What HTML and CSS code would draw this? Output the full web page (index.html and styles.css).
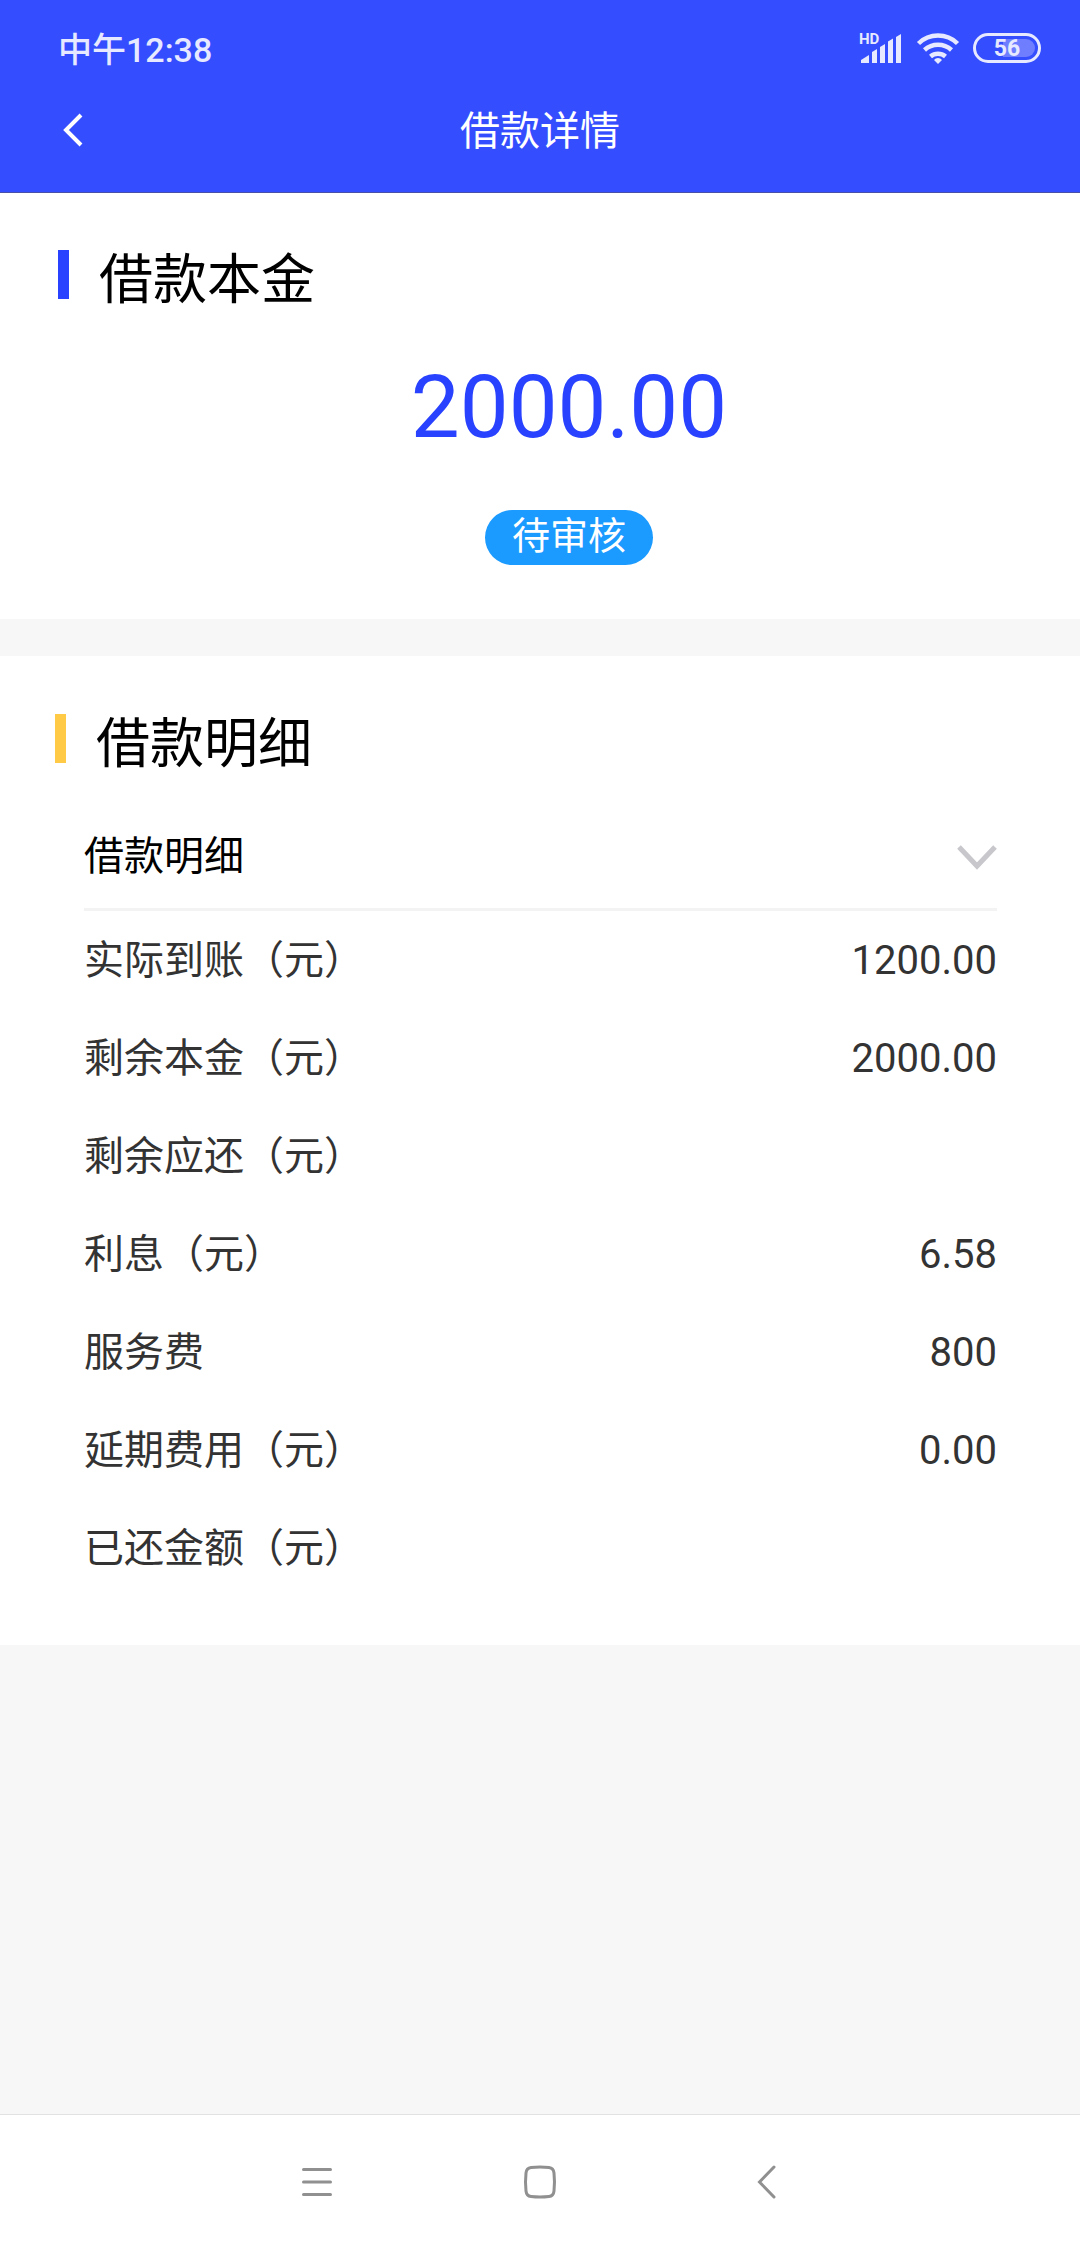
FILE: index.html
```html
<!DOCTYPE html>
<html lang="zh-CN">
  <head>
    <meta charset="UTF-8" />
    <meta name="viewport" content="width=device-width, initial-scale=1.0" />
    <title>借款详情</title>
    <link rel="stylesheet" href="styles.css">
  </head>
  <body>
    <header class="header">
      <div class="status-bar">
        <span class="status-time">中午12:38</span>
        <div class="status-icons">
          <svg class="signal" width="44" height="40" viewBox="0 0 44 40" fill="currentColor">
            <text x="0" y="16" class="signal-text">HD</text>
            <path d="M2 35v-3l8-5v8z"/>
            <path d="M13 35V24l5-3v14z"/>
            <path d="M21 35V19l5-3v19z"/>
            <path d="M29 35V13.500l5-3V35z"/>
            <path d="M37 35V9l5-3v29z"/>
          </svg>
          <svg class="wifi" width="42" height="32" viewBox="0 0 42 32" fill="none" stroke="currentColor" stroke-width="4.500">
            <path d="M1.500 11.500a28 28 0 0 1 39 0"/>
            <path d="M7.500 18a20 20 0 0 1 27 0"/>
            <path d="M13.500 24.500a11.500 11.500 0 0 1 15 0"/>
            <path d="M21 32l-4-4a5 5 0 0 1 8 0z" fill="currentColor" stroke="none"/>
          </svg>
          <div class="battery">
            <div class="battery-level"></div>
            <span class="battery-text">56</span>
          </div>
        </div>
      </div>
      <div class="title-bar">
        <button class="back-button" aria-label="返回">
          <svg width="20" height="34" viewBox="0 0 20 34" fill="none" stroke="currentColor" stroke-width="4">
            <path d="M18 2L3 17l15 15"/>
          </svg>
        </button>
        <h1 class="title">借款详情</h1>
      </div>
    </header>

    <main class="content">
      <section class="principal">
        <h2 class="section-title">借款本金</h2>
        <div class="amount">2000.00</div>
        <span class="badge">待审核</span>
      </section>

      <section class="details">
        <h2 class="section-title yellow">借款明细</h2>
        <div class="detail-box">
          <button class="detail-toggle">
            <span>借款明细</span>
            <svg width="40" height="28" viewBox="0 0 40 28" fill="none" stroke="#c7c7cc" stroke-width="5">
              <path d="M2 4l18 19L38 4"/>
            </svg>
          </button>
          <dl class="detail-list">
            <div class="detail-row"><dt>实际到账（元）</dt><dd>1200.00</dd></div>
            <div class="detail-row"><dt>剩余本金（元）</dt><dd>2000.00</dd></div>
            <div class="detail-row"><dt>剩余应还（元）</dt><dd></dd></div>
            <div class="detail-row"><dt>利息（元）</dt><dd>6.58</dd></div>
            <div class="detail-row"><dt>服务费</dt><dd>800</dd></div>
            <div class="detail-row"><dt>延期费用（元）</dt><dd>0.00</dd></div>
            <div class="detail-row"><dt>已还金额（元）</dt><dd></dd></div>
          </dl>
        </div>
      </section>
    </main>

    <nav class="nav-bar">
      <button class="nav-button" aria-label="菜单">
        <svg width="34" height="34" viewBox="0 0 34 34" fill="none" stroke="currentColor" stroke-width="3" stroke-linecap="round">
          <path d="M4.500 4.500h27M4.500 17h27M4.500 29.500h27"/>
        </svg>
      </button>
      <button class="nav-button" aria-label="主页">
        <svg width="34" height="34" viewBox="0 0 34 34" fill="none" stroke="currentColor" stroke-width="3">
          <path d="M8 2.500Q17 1.500 26 2.500Q30.500 3 31 8Q32 17 31 26Q30.500 31 26 31.500Q17 32.500 8 31.500Q3.500 31 3 26Q2 17 3 8Q3.500 3 8 2.500z"/>
        </svg>
      </button>
      <button class="nav-button" aria-label="后退">
        <svg width="34" height="34" viewBox="0 0 34 34" fill="none" stroke="currentColor" stroke-width="3" stroke-linecap="round">
          <path d="M27 2L12.500 17L27 32"/>
        </svg>
      </button>
    </nav>
  </body>
</html>
```

FILE: styles.css
```css
* {
  box-sizing: border-box;
}
body {
  font-family: Roboto, "Noto Sans CJK SC", sans-serif;
  background-color: #f7f7f7;
  color: #333;
  font-size: 40px;
  display: flex;
  flex-direction: column;
  min-height: 100vh;
  margin: 0;
}
h1,
h2,
dl,
dd {
  margin: 0;
  font-weight: 400;
}
button {
  font: inherit;
  color: inherit;
  background: none;
  border: none;
  padding: 0;
  cursor: pointer;
}
svg {
  display: block;
  overflow: visible;
}

/* header */
.header {
  background-color: #344dff;
  color: white;
  border-bottom: 1px solid #4850a8;
}
.status-bar {
  display: flex;
  justify-content: space-between;
  align-items: center;
  height: 96px;
  padding: 0 39px 0 58px;
  color: #e6e9ff;
}
.status-time {
  padding-bottom: 2px;
  font-size: 34px;
  font-weight: 500;
}
.status-icons {
  display: flex;
  align-items: center;
  gap: 14px;
}
.signal-text {
  font-size: 15px;
  font-weight: 700;
}
.battery {
  position: relative;
  display: flex;
  align-items: center;
  justify-content: center;
  width: 68px;
  height: 30px;
  border: 3px solid #e6e9ff;
  border-radius: 15px;
}
.battery-level {
  position: absolute;
  top: 3px;
  right: 3px;
  bottom: 3px;
  width: 32px;
  border-radius: 0 9px 9px 0;
  background-color: #6e7eff;
}
.battery-text {
  position: relative;
  font-size: 23px;
  font-weight: 700;
}
.title-bar {
  display: grid;
  grid-template-columns: 1fr auto 1fr;
  align-items: center;
  height: 96px;
  padding: 0 63px 28px;
}
.back-button {
  justify-self: start;
}
.title {
  padding-bottom: 4px;
  font-size: 40px;
}

/* sections */
.content {
  flex: 1;
}
.principal,
.details {
  background-color: white;
}
.principal {
  display: flex;
  flex-direction: column;
  align-items: center;
  padding: 57px 0 54px 58px;
  margin-bottom: 37px;
}
.section-title {
  display: flex;
  align-self: stretch;
  gap: 30px;
  color: #000;
  font-size: 54px;
  line-height: 62px;
}
.section-title::before {
  content: "";
  width: 11px;
  height: 49px;
  background-color: #2942ff;
}
.section-title.yellow::before {
  background-color: #ffca46;
}
.amount {
  margin-top: 44px;
  color: #2942ff;
  font-size: 87px;
  line-height: 102px;
}
.badge {
  margin-top: 52px;
  padding: 0 27px 3px;
  border-radius: 28px;
  background-color: #1b9aff;
  color: white;
  font-size: 38px;
  line-height: 52px;
}
.details {
  padding: 58px 0 47px 55px;
}
.detail-box {
  margin: 26px 83px 0 29px;
}
.detail-toggle {
  display: flex;
  justify-content: space-between;
  align-items: center;
  width: 100%;
  height: 109px;
  border-bottom: 3px solid #f3f3f3;
  color: #000;
}
.detail-toggle span {
  padding-bottom: 4px;
}
.detail-toggle svg {
  margin-top: 4px;
}
.detail-list {
  padding-top: 1px;
}
.detail-row {
  display: flex;
  justify-content: space-between;
  align-items: center;
  line-height: 98px;
}

/* system navigation */
.nav-bar {
  display: flex;
  justify-content: center;
  align-items: center;
  gap: 190px;
  height: 130px;
  padding-top: 4px;
  border-top: 1px solid #e2e2e2;
  background-color: white;
  color: #909090;
}
```
